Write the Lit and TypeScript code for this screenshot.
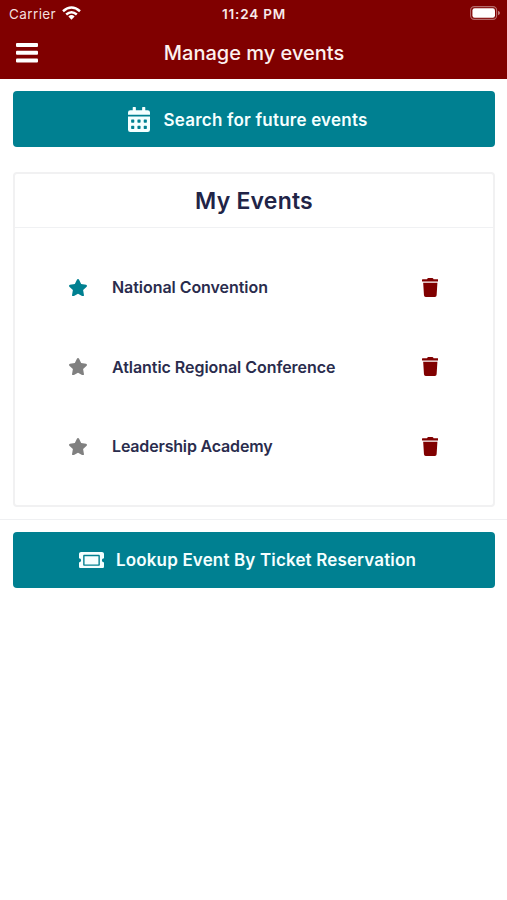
import { LitElement, html, css, svg } from "lit";
import { customElement, property } from "lit/decorators.js";
import { classMap } from "lit/directives/class-map.js";

const cells = [64, 192, 320].flatMap((x) =>
  [256, 384].map((y) => `M${x + 12} ${y}h40q12 0 12 12v40q0 12-12 12h-40q-12 0-12-12v-40q0-12 12-12z`)
);

const icons = {
  calendar: {
    box: "0 0 448 512",
    shape: svg`<path fill-rule="evenodd" d="M0 192h448v272q0 48-48 48H48q-48 0-48-48z${cells.join("")}M448 112v48H0v-48q0-48 48-48h48V12q0-12 12-12h40q12 0 12 12v52h128V12q0-12 12-12h40q12 0 12 12v52h48q48 0 48 48z"/>`,
  },
  ticket: {
    box: "0 64 576 384",
    shape: svg`<path d="M128 160h320v192H128V160zm400 96c0 26.51 21.49 48 48 48v96c0 26.51-21.49 48-48 48H48c-26.51 0-48-21.49-48-48v-96c26.51 0 48-21.49 48-48s-21.49-48-48-48v-96c0-26.51 21.49-48 48-48h480c26.51 0 48 21.49 48 48v96c-26.51 0-48 21.49-48 48zm-48-104c0-13.255-10.745-24-24-24H120c-13.255 0-24 10.745-24 24v208c0 13.255 10.745 24 24 24h336c13.255 0 24-10.745 24-24V152z"/>`,
  },
  star: {
    box: "20 0 536 512",
    shape: svg`<path d="M259.3 17.8L194 150.2 47.9 171.5c-26.2 3.8-36.7 36.1-17.7 54.6l105.7 103-25 145.5c-4.5 26.3 23.2 46 46.4 33.7L288 439.6l130.7 68.7c23.2 12.2 50.9-7.4 46.4-33.7l-25-145.5 105.7-103c19-18.5 8.5-50.8-17.7-54.6L382 150.2 316.7 17.8c-11.7-23.6-45.6-23.9-57.4 0z"/>`,
  },
  trash: {
    box: "0 0 448 512",
    shape: svg`<path d="M432 32H312l-9.4-18.7A24 24 0 0 0 281.1 0H166.8a23.72 23.72 0 0 0-21.4 13.3L136 32H16A16 16 0 0 0 0 48v32a16 16 0 0 0 16 16h416a16 16 0 0 0 16-16V48a16 16 0 0 0-16-16zM53.2 467a48 48 0 0 0 47.9 45h245.8a48 48 0 0 0 47.9-45L416 128H32z"/>`,
  },
  menu: {
    box: "0 0 22 20",
    shape: svg`<rect width="22" height="4" rx="1"/><rect y="7.8" width="22" height="4" rx="1"/><rect y="15.6" width="22" height="4" rx="1"/>`,
  },
  wifi: {
    box: "0 0 19 14",
    shape: svg`<g fill="none" stroke="currentColor" stroke-width="2.5"><path d="M1 5.2Q9.5-2.3 18 5.2"/><path d="M4.2 8.5Q9.5 3.9 14.8 8.5"/></g><path d="M6.4 10.4Q9.5 7.8 12.6 10.4L9.5 13.7z"/>`,
  },
  battery: {
    box: "0 0 30 14",
    shape: svg`<rect x=".6" y=".6" width="26" height="12.8" rx="3.6" fill="none" stroke="currentColor" stroke-width="1.1" opacity=".42"/><rect x="2.4" y="2.3" width="22.6" height="9.4" rx="2.2"/><path d="M28 4.8q2 .7 2 2.2t-2 2.2z" opacity=".5"/>`,
  },
};

@customElement("ui-icon")
class UiIcon extends LitElement {
  @property() name: keyof typeof icons = "star";
  static styles = css`
    :host { display: block; flex: none; }
    svg { display: block; width: 100%; height: 100%; fill: currentColor; }
  `;
  render() {
    const icon = icons[this.name];
    return html`<svg viewBox=${icon.box} preserveAspectRatio="none" aria-hidden="true">${icon.shape}</svg>`;
  }
}

@customElement("app-root")
class AppRoot extends LitElement {
  events = [
    { name: "National Convention", cls: "national", favorite: true },
    { name: "Atlantic Regional Conference", cls: "atlantic", favorite: false },
    { name: "Leadership Academy", cls: "leadership", favorite: false },
  ];

  static styles = css`
    :host {
      display: block;
      height: 900px;
      background: #fff;
      color: #212447;
      font-family: Inter, "Liberation Sans", sans-serif;
      white-space: nowrap;
    }
    * { box-sizing: border-box; }
    header { height: 79px; background: #800000; color: #fff; }
    .status {
      display: grid;
      grid-template-columns: 1fr auto 1fr;
      align-items: center;
      height: 27px;
      padding: 0 7px 0 9px;
      font-size: 13.5px;
    }
    .carrier { display: flex; align-items: center; gap: 6px; color: #f3dede; letter-spacing: 0.4px; }
    .wifi { width: 19px; height: 14px; margin-bottom: 1px; color: #fff; }
    .time { font-weight: 600; letter-spacing: 0.8px; margin-right: 1px; color: #f8eaea; }
    .battery { width: 30px; height: 14px; margin-bottom: 1px; justify-self: end; }
    .bar {
      display: grid;
      grid-template-columns: 22px 1fr 22px;
      align-items: center;
      height: 51px;
      padding: 0 15px 0 16px;
    }
    .menu { height: 20px; }
    h1 { margin: 0; text-align: center; font-size: 20px; font-weight: 500; color: #fdf1ef; }
    .action {
      display: flex;
      align-items: center;
      justify-content: center;
      width: 482px;
      height: 56px;
      margin: 0 0 0 13px;
      border: 0;
      border-radius: 4px;
      background: #008091;
      color: #f4ffff;
      font: 600 17px/24px Inter, sans-serif;
    }
    .search { margin-top: 12.4px; padding: 0 12px 0 0; gap: 13px; letter-spacing: 0.22px; }
    .lookup { margin-top: 12px; padding: 0 13px 0 0; gap: 12px; letter-spacing: 0.15px; }
    .action span { padding-top: 1px; }
    .calendar { width: 22px; height: 25px; }
    .ticket { width: 25px; height: 16.6px; }
    .card {
      width: 482px;
      height: 335px;
      margin: 24.6px 0 0 13px;
      border: 2px solid #f1f1f2;
      border-radius: 4px;
    }
    h2 {
      height: 54px;
      margin: 0;
      border-bottom: 1px solid #f0f1f3;
      text-align: center;
      font-size: 23px;
      line-height: 54px;
      font-weight: 600;
      letter-spacing: 0.22px;
    }
    ul { margin: 19.5px 0 0; padding: 0; list-style: none; }
    li {
      display: grid;
      grid-template-columns: 18px 1fr 17px;
      column-gap: 25px;
      align-items: center;
      height: 79.5px;
      padding: 0 54.5px 0 54px;
      color: #2a2c4d;
      font-size: 16px;
      font-weight: 600;
    }
    .national, .atlantic { letter-spacing: -0.05px; }
    .leadership { letter-spacing: -0.17px; }
    .star { width: 18px; height: 17.3px; color: #808080; }
    .favorite { color: #008091; }
    .trash { width: 16.6px; height: 19px; color: #800000; }
    .rule { height: 1px; margin: 12px 0 0; border: 0; background: #eff0f2; }
  `;

  render() {
    return html`
      <header>
        <div class="status">
          <div class="carrier"><span>Carrier</span><ui-icon class="wifi" name="wifi"></ui-icon></div>
          <span class="time">11:24 PM</span>
          <ui-icon class="battery" name="battery"></ui-icon>
        </div>
        <div class="bar">
          <ui-icon class="menu" name="menu"></ui-icon>
          <h1>Manage my events</h1>
        </div>
      </header>
      <main>
        <button class="action search">
          <ui-icon class="calendar" name="calendar"></ui-icon><span>Search for future events</span>
        </button>
        <section class="card">
          <h2><span>My Events</span></h2>
          <ul>
            ${this.events.map(
              (e) => html`<li>
                <ui-icon class=${classMap({ star: true, favorite: e.favorite })} name="star"></ui-icon>
                <span class=${e.cls}>${e.name}</span>
                <ui-icon class="trash" name="trash"></ui-icon>
              </li>`
            )}
          </ul>
        </section>
        <hr class="rule" />
        <button class="action lookup">
          <ui-icon class="ticket" name="ticket"></ui-icon><span>Lookup Event By Ticket Reservation</span>
        </button>
      </main>
    `;
  }
}
